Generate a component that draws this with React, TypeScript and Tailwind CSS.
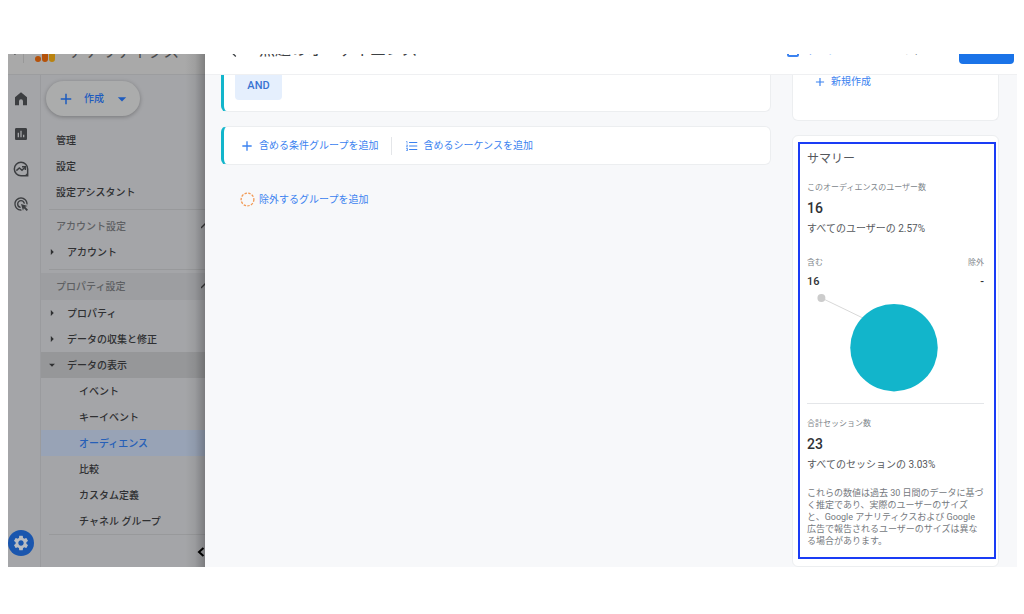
import type { ReactNode } from "react";
import { MdAdd, MdAdsClick, MdArrowDropDown, MdArrowRight, MdChevronLeft, MdFormatListNumbered, MdInsertChart, MdSettings } from "react-icons/md";

type NavRow =
  | { kind: "link" | "sub"; label: string; active?: boolean }
  | { kind: "section"; label: string; shaded?: boolean }
  | { kind: "group"; label: string; open?: boolean }
  | { kind: "divider" };

const navRows: NavRow[] = [
  { kind: "link", label: "管理" },
  { kind: "link", label: "設定" },
  { kind: "link", label: "設定アシスタント" },
  { kind: "divider" },
  { kind: "section", label: "アカウント設定" },
  { kind: "group", label: "アカウント" },
  { kind: "divider" },
  { kind: "section", label: "プロパティ設定", shaded: true },
  { kind: "group", label: "プロパティ" },
  { kind: "group", label: "データの収集と修正" },
  { kind: "group", label: "データの表示", open: true },
  { kind: "sub", label: "イベント" },
  { kind: "sub", label: "キーイベント" },
  { kind: "sub", label: "オーディエンス", active: true },
  { kind: "sub", label: "比較" },
  { kind: "sub", label: "カスタム定義" },
  { kind: "sub", label: "チャネル グループ" },
];

function HomeIcon() {
  return (
    <svg viewBox="0 0 24 24" className="size-4" fill="currentColor">
      <path d="M3 21.5V9.2L12 2l9 7.2v12.3h-6v-6a3 3 0 0 0-6 0v6z" />
    </svg>
  );
}

function ExploreIcon() {
  return (
    <svg viewBox="0 0 24 24" className="size-4" fill="none" stroke="currentColor" strokeWidth="2.2">
      <path d="M12 2a10 10 0 1 0 0 20h10V12A10 10 0 0 0 12 2z" />
      <path d="M5 14.5l4.5-4 4 3.5 4.5-4.5" />
      <path d="M13.5 8.5h5v5" />
      <path d="M17 22.5l5.5-5.5v5.5z" fill="currentColor" stroke="none" />
    </svg>
  );
}

function AnalyticsLogo() {
  return (
    <svg viewBox="0 0 20 20" className="size-5">
      <circle cx="3" cy="17" r="3" fill="#b5520a" />
      <rect x="7" y="5" width="6" height="15" rx="3" fill="#b5520a" />
      <rect x="14" y="0" width="6" height="20" rx="3" fill="#b98310" />
    </svg>
  );
}

function NavItem({ row }: { row: NavRow }) {
  if (row.kind === "divider") {
    return <li className="mt-1 mb-[3px] ml-2 border-t border-[#98999b]" />;
  }
  if (row.kind === "section") {
    return (
      <li className={row.shaded ? "bg-[#9d9ea1] pb-px" : ""}>
        <button className="flex h-[26px] w-full items-center justify-between pl-[15px] text-[#5e6063]">
          {row.label}
          <svg viewBox="0 0 8 8" className="-mr-1 size-2" fill="none" stroke="#38393b" strokeWidth="1.3">
            <path d="M0 6l4-4 4 4" />
          </svg>
        </button>
      </li>
    );
  }
  if (row.kind === "group") {
    return (
      <li className={row.open ? "bg-[#969799]" : ""}>
        <button className="flex h-[26px] w-full items-center gap-2 pl-1">
          {row.open ? <MdArrowDropDown className="size-[14px]" /> : <MdArrowRight className="size-[14px]" />}
          {row.label}
        </button>
      </li>
    );
  }
  const indent = row.kind === "sub" ? "pl-[38px]" : "pl-[15px]";
  const color = row.active ? "bg-[#98a3b6] text-[#265fb8]" : "";
  return (
    <li>
      <a href="#" className={`flex h-[26px] items-center ${indent} ${color}`}>
        {row.label}
      </a>
    </li>
  );
}

function Sidebar() {
  return (
    <div className="relative flex w-[197px] shrink-0 flex-col overflow-hidden bg-[#a4a5a8] text-[10px] font-medium text-[#2f3032]">
      <div className="flex h-[21px] shrink-0 items-end border-b border-[#9c9d9f] bg-[#a9a9a9]">
        <MdChevronLeft className="mb-4 size-3 shrink-0" />
        <span className="mb-[11px] ml-[3px] h-5 w-px shrink-0 bg-[#989898]" />
        <div className="mb-3 ml-[11px] shrink-0">
          <AnalyticsLogo />
        </div>
        <span className="mb-[14px] ml-[14px] text-[16px] leading-4 whitespace-nowrap font-normal text-[#4a4b4d]">アナリティクス</span>
      </div>
      <div className="flex grow">
        <nav className="flex w-[33px] shrink-0 flex-col items-center border-r border-[#9a9b9e] pt-4 pr-[7px] text-[#3c3e41]">
          <div className="flex flex-col gap-[19px]">
            <a href="#" aria-label="ホーム"><HomeIcon /></a>
            <a href="#" aria-label="レポート"><MdInsertChart className="size-4" /></a>
            <a href="#" aria-label="探索"><ExploreIcon /></a>
            <a href="#" aria-label="広告"><MdAdsClick className="size-4" /></a>
          </div>
          <a href="#" aria-label="管理" className="mt-auto mb-[11px] flex size-[26px] items-center justify-center rounded-full bg-[#1a56ae] text-[#b9bcc2]">
            <MdSettings className="size-[18px]" />
          </a>
        </nav>
        <div className="flex min-w-0 grow flex-col">
          <button className="mt-[6px] ml-[5px] flex h-[35px] w-[94px] items-center rounded-full bg-[#abacac] pl-[11px] text-[#1d5bbf] shadow-[0_1px_4px_rgba(0,0,0,0.28)]">
            <MdAdd className="size-[18px]" />
            <span className="ml-[9px]">作成</span>
            <MdArrowDropDown className="ml-2 size-5" />
          </button>
          <ul className="mt-[11px]">
            {navRows.map((row, i) => (
              <NavItem key={i} row={row} />
            ))}
          </ul>
          <div className="ml-2 flex grow items-end justify-end border-t border-[#98999b] pb-[10px]">
            <button aria-label="閉じる" className="text-black">
              <svg viewBox="0 0 8 10" className="h-[10px] w-2" fill="none" stroke="currentColor" strokeWidth="2">
                <path d="M6.5 1L2 5l4.5 4" />
              </svg>
            </button>
          </div>
        </div>
      </div>
      <div className="pointer-events-none absolute inset-y-0 right-0 w-5 bg-linear-to-l from-black/25 via-black/6 to-transparent" />
    </div>
  );
}

function TextButton({ icon, children }: { icon: ReactNode; children: ReactNode }) {
  return (
    <button className="flex items-center gap-1 whitespace-nowrap text-[10px] leading-3 text-[#3b82f0]">
      {icon}
      {children}
    </button>
  );
}

function Conditions() {
  return (
    <div className="min-w-0 grow">
      <div className="h-[37px] rounded-b-md border border-t-0 border-l-3 border-[#eceef0] border-l-[#12b5cb] bg-white pl-[11px]">
        <button className="block h-[25px] w-[47px] rounded-b-sm bg-[#e5effd] pb-[2px] text-[11px] font-medium text-[#3973d2]">AND</button>
      </div>
      <div className="mt-[14px] flex h-[39px] items-center rounded-md border border-l-3 border-[#eceef0] border-l-[#12b5cb] bg-white pl-[15px]">
        <TextButton icon={<MdAdd className="size-4" />}>含める条件グループを追加</TextButton>
        <span className="mx-[13px] h-[18px] w-px bg-[#e4e6e9]" />
        <TextButton icon={<MdFormatListNumbered className="size-[14px]" />}>含めるシーケンスを追加</TextButton>
      </div>
      <div className="mt-[27px] pl-[19px]">
        <TextButton
          icon={
            <svg viewBox="0 0 16 16" className="size-[15px]" fill="none" stroke="#f29a55" strokeWidth="1.4" strokeDasharray="2.6 1.4">
              <circle cx="8" cy="8" r="6.8" />
            </svg>
          }
        >
          除外するグループを追加
        </TextButton>
      </div>
    </div>
  );
}

function Metric({ label, value, note }: { label: string; value: string; note: string }) {
  return (
    <div>
      <p className="text-[8px] leading-3 text-[#80868b]">{label}</p>
      <p className="mt-1 text-[14px] leading-5 font-medium text-[#303236]">{value}</p>
      <p className="mt-[3px] text-[10px] leading-4 text-[#55585c]">{note}</p>
    </div>
  );
}

function Summary() {
  return (
    <section className="mt-[14px] rounded-md border border-[#eceef0] bg-white px-[5px] pt-[6px] pb-[7px]">
      <div className="mr-[-3px] border-2 border-[#1a3cf5] pt-[7px] pr-[10px] pb-[10px] pl-[7px]">
        <h2 className="mb-[15px] text-[12px] leading-4 text-[#55585c]">サマリー</h2>
        <Metric label="このオーディエンスのユーザー数" value="16" note="すべてのユーザーの 2.57%" />
        <div className="mt-5 flex justify-between text-[8px] leading-3 text-[#80868b]">
          <div>
            <p>含む</p>
            <p className="mt-[5px] text-[11px] leading-4 font-medium text-[#303236]">16</p>
          </div>
          <div className="text-right">
            <p>除外</p>
            <p className="mt-[5px] text-[11px] leading-4 font-medium text-[#303236]">-</p>
          </div>
        </div>
        <svg viewBox="0 0 178 114" className="w-full">
          <path d="M14.5 8L60 30" stroke="#d8d8d8" strokeWidth="1" />
          <circle cx="14.5" cy="8" r="4" fill="#cccccc" />
          <circle cx="87.5" cy="58" r="44" fill="#12b5cb" />
        </svg>
        <hr className="mb-[14px] border-[#e4e6e9]" />
        <Metric label="合計セッション数" value="23" note="すべてのセッションの 3.03%" />
        <p className="mt-[14px] text-[9px] leading-[12px] text-[#75797e]">
          これらの数値は過去 30 日間のデータに基づく推定であり、実際のユーザーのサイズと、Google アナリティクスおよび Google 広告で報告されるユーザーのサイズは異なる場合があります。
        </p>
      </div>
    </section>
  );
}

export default function App() {
  return (
    <div className="min-h-screen bg-white pt-[54px] pr-[7px] pb-[47px] pl-2 font-[Roboto,'Noto_Sans_CJK_JP',sans-serif]">
      <div className="flex overflow-hidden">
        <Sidebar />
        <main className="flex min-w-0 grow flex-col bg-[#f7f8fa]">
          <header className="flex h-[21px] items-end border-b border-[#eff0f2] bg-white pr-[3px] pl-[21px]">
            <button aria-label="戻る" className="mb-[13px]">
              <MdChevronLeft className="size-4 text-[#3c4043]" />
            </button>
            <h1 className="mb-4 ml-[17px] grow text-[16px] leading-4 whitespace-nowrap text-[#3c4043]">無題のオーディエンス</h1>
            <button className="mb-4 flex items-end gap-2 text-[10px] leading-[14px] whitespace-nowrap text-[#3b82f0]">
              <span className="mb-px size-3 rounded-[2px] border-2 border-current" />
              テンプレート
            </button>
            <button className="mb-4 ml-[34px] text-[10px] leading-[14px] whitespace-nowrap text-[#6b6f74]">キャンセル</button>
            <button className="mb-[10px] ml-2 h-7 w-[55px] shrink-0 rounded bg-[#1a73e8] pb-[5px] text-[10px] leading-[14px] text-white">保存</button>
          </header>
          <div className="flex grow items-start gap-[21px] pr-[18px] pl-4">
            <Conditions />
            <aside className="w-[207px] shrink-0">
              <div className="h-[46px] rounded-b-md border border-t-0 border-[#eceef0] bg-white pl-5">
                <TextButton icon={<MdAdd className="size-[14px]" />}>新規作成</TextButton>
              </div>
              <Summary />
            </aside>
          </div>
        </main>
      </div>
    </div>
  );
}
